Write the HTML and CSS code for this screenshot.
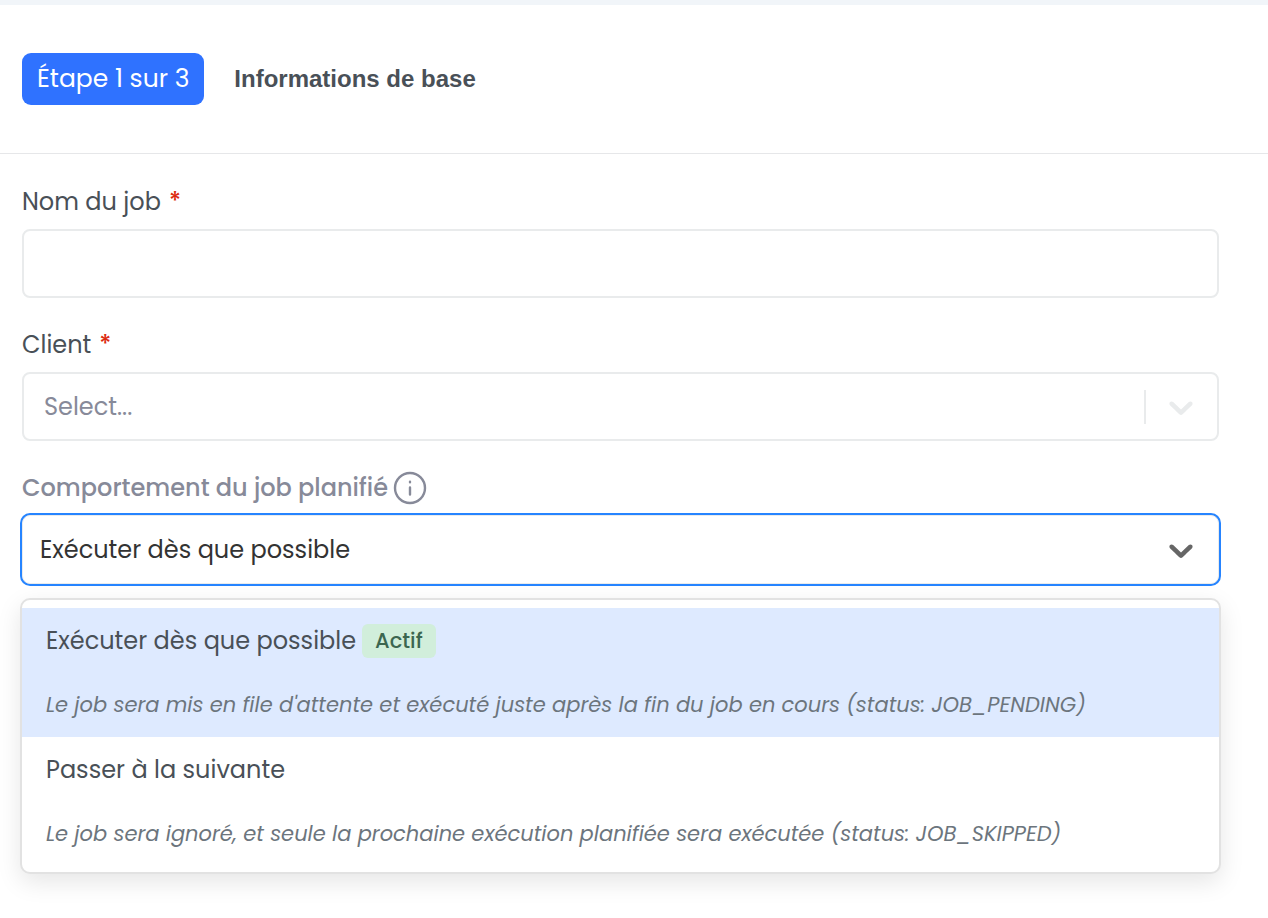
FILE: index.html
```html
<!DOCTYPE html>
<html lang="fr">
<head>
  <meta charset="UTF-8">
  <meta name="viewport" content="width=device-width, initial-scale=1.0">
  <title>Nouveau job</title>
  <link rel="stylesheet" href="styles.css">
</head>
<body>

  <header class="step-header">
    <span class="step-badge">Étape 1 sur 3</span>
    <h1>Informations de base</h1>
  </header>

  <form id="jobForm">
    <div class="field">
      <label for="jobName">Nom du job <span class="required">*</span></label>
      <input type="text" id="jobName" class="control" required>
    </div>

    <div class="field">
      <label for="client">Client <span class="required">*</span></label>
      <div class="select-wrap">
        <select id="client" class="control placeholder" required>
          <option value="">Select...</option>
        </select>
        <div class="indicators">
          <span class="separator"></span>
          <svg class="chevron" viewBox="0 0 20 20" aria-hidden="true"><path d="M4.516 7.548c0.436-0.446 1.043-0.481 1.576 0l3.908 3.747 3.908-3.747c0.533-0.481 1.141-0.446 1.574 0 0.436 0.445 0.408 1.197 0 1.615-0.406 0.418-4.695 4.502-4.695 4.502-0.217 0.223-0.502 0.335-0.787 0.335s-0.57-0.112-0.789-0.335c0 0-4.287-4.084-4.695-4.502s-0.436-1.17 0-1.615z"/></svg>
        </div>
      </div>
    </div>

    <div class="field">
      <label for="behavior" class="muted">Comportement du job planifié
        <svg class="info" viewBox="0 0 34 34" aria-hidden="true">
          <circle cx="17" cy="17" r="15"/>
          <path d="M17 16.5v7M17 10.8v.4"/>
        </svg>
      </label>
      <div class="select-wrap">
        <select id="behavior" class="control active">
          <option selected>Exécuter dès que possible</option>
          <option>Passer à la suivante</option>
        </select>
        <div class="indicators">
          <svg class="chevron dark" viewBox="0 0 20 20" aria-hidden="true"><path d="M4.516 7.548c0.436-0.446 1.043-0.481 1.576 0l3.908 3.747 3.908-3.747c0.533-0.481 1.141-0.446 1.574 0 0.436 0.445 0.408 1.197 0 1.615-0.406 0.418-4.695 4.502-4.695 4.502-0.217 0.223-0.502 0.335-0.787 0.335s-0.57-0.112-0.789-0.335c0 0-4.287-4.084-4.695-4.502s-0.436-1.17 0-1.615z"/></svg>
        </div>

        <ul class="menu" role="listbox" aria-label="Comportement du job planifié">
          <li class="option selected" role="option" aria-selected="true">
            <div class="option-title">Exécuter dès que possible <span class="tag">Actif</span></div>
            <p>Le job sera mis en file d'attente et exécuté juste après la fin du job en cours (status: JOB_PENDING)</p>
          </li>
          <li class="option" role="option" aria-selected="false">
            <div class="option-title">Passer à la suivante</div>
            <p>Le job sera ignoré, et seule la prochaine exécution planifiée sera exécutée (status: JOB_SKIPPED)</p>
          </li>
        </ul>
      </div>
    </div>
  </form>

</body>
</html>
```
FILE: styles.css
```css
* {
  box-sizing: border-box;
}
body {
  margin: 0;
  min-height: 100vh;
  border-top: 5px solid #f1f5f9;
  font-family: Poppins, Inter, sans-serif;
  font-size: 24px;
  line-height: 36px;
  color: #495057;
  background: #fff;
}
.step-header {
  display: flex;
  align-items: center;
  gap: 30px;
  padding: 48px 22px;
  border-bottom: 1px solid #e6e7e9;
}
.step-badge {
  padding: 8px 15px;
  border-radius: 9px;
  font-size: 25px;
  color: #fff;
  background: #2f72ff;
}
h1 {
  margin: 0;
  font-family: "Liberation Sans", sans-serif;
  font-size: 24px;
  font-weight: bold;
}
form {
  display: flex;
  flex-direction: column;
  gap: 29px;
  padding: 30px 49px 30px 22px;
}
label {
  display: flex;
  align-items: center;
  gap: 8px;
  margin-bottom: 9px;
}
.required {
  font-weight: 500;
  color: #dc2a0f;
}
.muted {
  gap: 5px;
  font-weight: 500;
  color: #878a99;
}
.info {
  width: 34px;
  height: 34px;
  fill: none;
  stroke: #878a99;
  stroke-width: 2.4;
  stroke-linecap: round;
}
.control {
  display: block;
  width: 100%;
  height: 69px;
  padding: 0 20px;
  border: 2px solid #e9ebec;
  border-radius: 8px;
  font: inherit;
  color: #333;
  background: #fff;
  appearance: none;
  outline: none;
}
.placeholder {
  color: #878a99;
}
.active {
  padding: 0 17px;
  border-width: 1px;
  box-shadow: 0 0 0 2px #2684ff;
}
.select-wrap {
  position: relative;
}
.indicators {
  position: absolute;
  top: 0;
  right: 18px;
  height: 69px;
  display: flex;
  align-items: center;
  gap: 15px;
  pointer-events: none;
}
.separator {
  width: 2px;
  height: 34px;
  background: #e9ebec;
}
.chevron {
  width: 40px;
  height: 40px;
  fill: #e9ebec;
}
.dark {
  fill: #666;
}
.menu {
  position: absolute;
  top: calc(100% + 14px);
  left: -2px;
  right: -2px;
  margin: 0;
  padding: 8px 0 6px;
  list-style: none;
  border: 2px solid #e2e2e2;
  border-radius: 10px;
  background: #fff;
  box-shadow: 0 8px 24px rgba(0, 0, 0, 0.1);
}
.option {
  padding: 15px 24px;
}
.option.selected {
  background: #deeaff;
}
.option-title {
  display: flex;
  align-items: center;
  gap: 6px;
}
.option p {
  margin: 29px 0 0;
  font-size: 21px;
  line-height: 34px;
  font-style: italic;
  color: #6c757d;
}
.tag {
  padding: 0 13px;
  border-radius: 6px;
  font-size: 21px;
  font-weight: 500;
  line-height: 34px;
  color: #3c6650;
  background: #d1eedb;
}
```
